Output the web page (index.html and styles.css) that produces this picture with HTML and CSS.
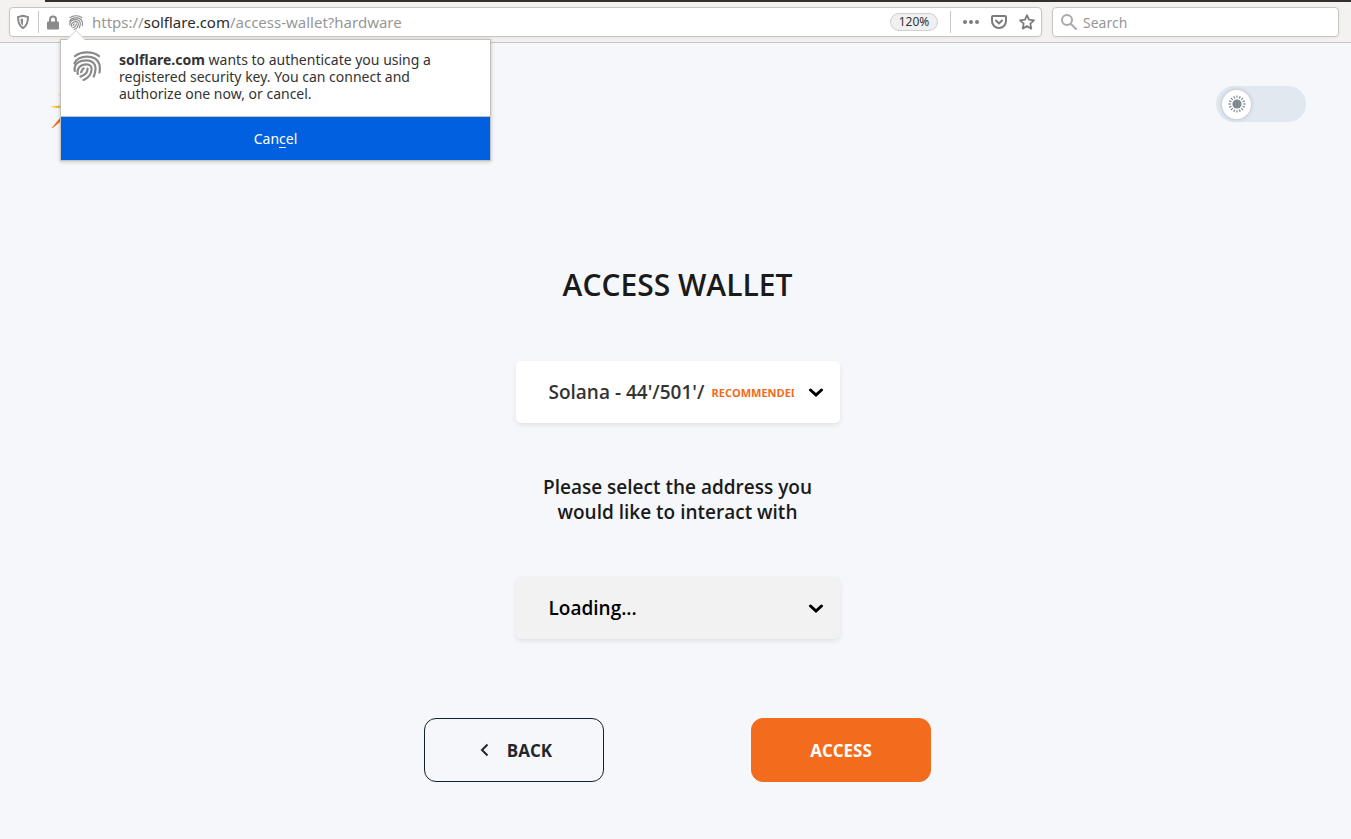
FILE: index.html
```html
<!DOCTYPE html>
<html lang="en">
<head>
<meta charset="utf-8">
<title>Access Wallet</title>
<link rel="stylesheet" href="styles.css">
</head>
<body>
<svg class="symbols" aria-hidden="true">
  <symbol id="fingerprint" viewBox="0 0 28 30">
    <g fill="none" stroke="currentColor" stroke-width="2.2" stroke-linecap="round">
      <path d="M2 5.2C8 .2 20 .2 26 5.2"/>
      <path d="M1.500 12.500C5 3.300 23 3.300 26.300 13C27 16 27 19 26.500 21.500"/>
      <path d="M1.800 20C.5 13 6 9.300 13.500 9.300C20 9.300 22.800 13.500 22.500 18C22.300 21 21.800 23 20.800 25.500"/>
      <path d="M4.800 23C3.500 17.500 7.500 13.300 13.500 13.300C17 13.300 18.800 15.500 18.600 18.500C18.200 23.500 15.500 27 10.500 29"/>
      <path d="M7.500 25.600C12 24.200 14.600 21.500 14.600 17.600"/>
      <path d="M8 21.300C8.800 20.500 8.800 18.800 10.600 17.500"/>
    </g>
  </symbol>
</svg>
<header class="chrome">
  <div class="tab-edge"></div>
  <div class="toolbar">
    <div class="url-bar">
      <button class="icon-btn" aria-label="Tracking protection"><svg width="14" height="16" viewBox="0 0 14 16"><path d="M7 1.800C5 2.500 3 2.800 2 3C2 8.500 2.800 11.800 7 14C11.200 11.800 12 8.500 12 3C11 2.800 9 2.500 7 1.800Z" fill="none" stroke="currentColor" stroke-width="2" stroke-linejoin="round"/><path d="M7 4.500L4.500 5C4.500 8.500 5 10.300 7 11.500Z" fill="currentColor"/></svg></button>
      <span class="divider"></span>
      <button class="icon-btn" aria-label="Connection secure"><svg width="12" height="15" viewBox="0 0 12 15"><path d="M3 7V4.500A3 3 0 0 1 9 4.500V7" fill="none" stroke="currentColor" stroke-width="2"/><rect y="6.500" width="12" height="8" rx="1" fill="currentColor"/></svg></button>
      <div class="auth-anchor">
        <button class="icon-btn" aria-label="Security key request"><svg width="14" height="15"><use href="#fingerprint"/></svg></button>
        <section class="popup" role="dialog" aria-label="Security key request">
          <div class="popup-body">
            <svg class="popup-icon" width="28" height="30"><use href="#fingerprint"/></svg>
            <p class="popup-text"><b>solflare.com</b> wants to authenticate you using a registered security key. You can connect and authorize one now, or cancel.</p>
          </div>
          <button class="popup-cancel">Can<u>c</u>el</button>
        </section>
      </div>
      <div class="address">https://<span class="host">solflare.com</span>/access-wallet?hardware</div>
      <button class="zoom-level">120%</button>
      <span class="divider"></span>
      <div class="page-actions">
        <button class="icon-btn" aria-label="Page actions"><svg width="16" height="16" viewBox="0 0 16 16" fill="currentColor"><circle cx="2" cy="8" r="2"/><circle cx="8" cy="8" r="2"/><circle cx="14" cy="8" r="2"/></svg></button>
        <button class="icon-btn" aria-label="Save to Pocket"><svg width="16" height="16" viewBox="0 0 16 16" fill="none" stroke="currentColor" stroke-width="2" stroke-linejoin="round" stroke-linecap="round"><path d="M2 2H14Q15 2 15 3V7A7 7 0 0 1 1 7V3Q1 2 2 2Z"/><path d="M5 6.500L8 9.500L11 6.500"/></svg></button>
        <button class="icon-btn" aria-label="Bookmark this page"><svg width="16" height="16" viewBox="0 0 16 16" fill="none" stroke="currentColor" stroke-width="1.800" stroke-linejoin="round"><path d="M8 1.200L10 5.700L15 6.300L11.300 9.600L12.300 14.600L8 12.100L3.700 14.600L4.700 9.600L1 6.300L6 5.700Z"/></svg></button>
      </div>
    </div>
    <label class="search-bar">
      <svg width="16" height="16" viewBox="0 0 16 16" fill="none" stroke="currentColor" stroke-width="2" stroke-linecap="round"><circle cx="6" cy="6" r="5"/><path d="M10 10L15 15"/></svg>
      <input type="search" placeholder="Search" aria-label="Search">
    </label>
  </div>
</header>
<div class="page">
  <div class="site-bar">
    <a class="logo" href="#" aria-label="Solflare"><svg width="48" height="48" viewBox="0 0 48 48"><path d="M0 27L16 24.500V29Z" fill="#fbb615"/><path d="M7 13L16 19V22Z" fill="#fdc93a"/><path d="M0 50L14 33V39Z" fill="#f26b1d"/></svg></a>
    <label class="theme-toggle">
      <input type="checkbox" role="switch" aria-label="Dark theme">
      <span class="knob"><svg width="18" height="18" viewBox="0 0 18 18"><circle cx="9" cy="9" r="4.600" fill="#7f8a93"/><circle cx="9" cy="9" r="7.200" fill="none" stroke="#7f8a93" stroke-width="2.600" pathLength="64" stroke-dasharray="1.600 2.400" stroke-dashoffset="0.800"/></svg></span>
    </label>
  </div>
  <main class="access">
    <h1>ACCESS WALLET</h1>
    <div class="field">
      <select aria-label="Derivation path"><option>Solana - 44'/501'/</option></select>
      <span class="badge">RECOMMENDED</span>
      <svg class="chevron" width="16" height="10" viewBox="0 0 16 10"><path d="M2.500 2L8 7L13.500 2"/></svg>
    </div>
    <label class="prompt" for="address">Please select the address you would like to interact with</label>
    <div class="field">
      <select id="address" disabled><option>Loading...</option></select>
      <svg class="chevron" width="16" height="10" viewBox="0 0 16 10"><path d="M2.500 2L8 7L13.500 2"/></svg>
    </div>
    <div class="actions">
      <button class="btn btn-back"><svg width="9" height="14" viewBox="0 0 9 14"><path d="M7.500 1.500L2 7L7.500 12.500" fill="none" stroke="currentColor" stroke-width="2"/></svg>BACK</button>
      <button class="btn btn-access">ACCESS</button>
    </div>
  </main>
</div>
</body>
</html>
```
FILE: styles.css
```css
* { box-sizing: border-box; }
body {
  margin: 0;
  min-height: 100vh;
  background: #f5f7fb;
  font-family: "Open Sans", sans-serif;
  color: #1a1a1a;
}
button { font: inherit; color: inherit; }
.symbols { position: absolute; width: 0; height: 0; }

.chrome {
  background: #f3f2f0;
  border-bottom: 1px solid #c9c5c1;
  font-family: "Noto Sans", sans-serif;
  font-size: 14px;
}
.tab-edge { height: 2px; margin-left: 45px; background: #33302c; }
.toolbar { display: flex; gap: 10px; padding: 5px 12px 5px 9px; }
.url-bar, .search-bar {
  display: flex;
  align-items: center;
  height: 30px;
  background: #fff;
  border: 1px solid #c9c5c1;
  border-radius: 4px;
  box-shadow: 0 1px 3px rgba(0, 0, 0, .06);
}
.url-bar { flex: 1; gap: 8px; padding: 0 6px; color: #8a8a8a; }
.icon-btn { display: flex; padding: 0; border: 0; background: none; }
.divider { width: 1px; height: 22px; background: #c9c5c1; }
.address { flex: 1; margin-left: 1px; color: #979797; font-size: 15px; }
.host { color: #2b2b2b; }
.zoom-level {
  width: 48px;
  height: 18px;
  margin-right: 4px;
  padding: 0;
  border: 1px solid #cfcfcf;
  border-radius: 9px;
  background: #f0f0f0;
  color: #333;
  font-size: 12px;
  line-height: 16px;
}
.page-actions { display: flex; gap: 12px; margin-left: 4px; color: #7c7c7c; }
.search-bar { width: 287px; gap: 6px; padding: 0 8px; color: #aaa; }
.search-bar input {
  flex: 1;
  min-width: 0;
  padding: 0;
  border: 0;
  outline: 0;
  background: none;
  font: inherit;
}
.search-bar input::placeholder { color: #979797; }

.auth-anchor { position: relative; margin-left: 2px; }
.popup {
  position: absolute;
  z-index: 1;
  top: 24px;
  left: -9px;
  width: 431px;
  border: 1px solid #c4c0bc;
  background: #fff;
  box-shadow: 0 1px 4px rgba(0, 0, 0, .2);
  color: #333;
}
.popup::before {
  content: "";
  position: absolute;
  top: -9px;
  left: 6px;
  border: 9px solid transparent;
  border-top: 0;
  border-bottom-color: #fff;
  filter: drop-shadow(0 -1px 0 #d0cdca);
}
.popup-body { display: flex; gap: 18px; padding: 11px 40px 14px 12px; }
.popup-icon { flex: none; color: #8a8a8a; }
.popup-text { margin: 0; font-size: 14px; line-height: 17px; }
.popup-cancel {
  display: block;
  width: 100%;
  height: 44px;
  border: 0;
  border-top: 1px solid #c4c0bc;
  background: #0060df;
  color: #fff;
}
.popup-cancel u { text-underline-offset: 3px; }

.site-bar {
  display: flex;
  justify-content: space-between;
  align-items: center;
  padding: 37px 45px 0 50px;
}
.logo { display: flex; }
.theme-toggle {
  position: relative;
  display: flex;
  align-items: center;
  width: 90px;
  height: 36px;
  padding: 0 6px;
  border-radius: 18px;
  background: #e2e8ef;
}
.theme-toggle input { position: absolute; inset: 0; margin: 0; opacity: 0; }
.knob {
  display: grid;
  place-items: center;
  width: 29px;
  height: 29px;
  border-radius: 50%;
  background: #fff;
  box-shadow: 0 0 4px rgba(60, 70, 90, .3);
}

.access {
  display: flex;
  flex-direction: column;
  align-items: center;
  padding: 136px 16px 40px 20px;
}
h1 { margin: 0; font-size: 30px; font-weight: 600; line-height: 42px; }
.field {
  position: relative;
  width: 324px;
  max-width: 100%;
}
h1 + .field { margin-top: 55px; }
.field select {
  display: block;
  appearance: none;
  width: 100%;
  height: 62px;
  padding: 0 48px 0 33px;
  border: 0;
  border-radius: 5px;
  background: #fff;
  box-shadow: 0 2px 5px rgba(0, 0, 0, .09);
  color: #333;
  font: 600 19px "Open Sans", sans-serif;
}
.field select:disabled { background: #f2f2f2; color: #000; opacity: 1; }
.badge {
  position: absolute;
  top: 24px;
  right: 46px;
  width: 82px;
  overflow: hidden;
  color: #f36b1c;
  font-size: 11px;
  font-weight: 700;
  line-height: 16px;
  pointer-events: none;
}
.chevron {
  position: absolute;
  top: 27px;
  right: 16px;
  fill: none;
  stroke: #000;
  stroke-width: 3;
  stroke-linecap: round;
  pointer-events: none;
}
.prompt {
  width: 300px;
  margin: 52px 0;
  font-size: 19px;
  font-weight: 600;
  line-height: 25px;
  text-align: center;
}
.actions {
  display: flex;
  justify-content: space-between;
  width: 507px;
  max-width: 100%;
  margin-top: 79px;
}
.btn {
  display: flex;
  align-items: center;
  justify-content: center;
  gap: 18px;
  width: 180px;
  height: 64px;
  border: 1px solid #14202e;
  border-radius: 12px;
  font-size: 17px;
  font-weight: 700;
}
.btn-back { padding: 0 6px 0 10px; background: transparent; color: #23272d; }
.btn-access { border-color: #f36b1c; background: #f36b1c; color: #fff; }
```
